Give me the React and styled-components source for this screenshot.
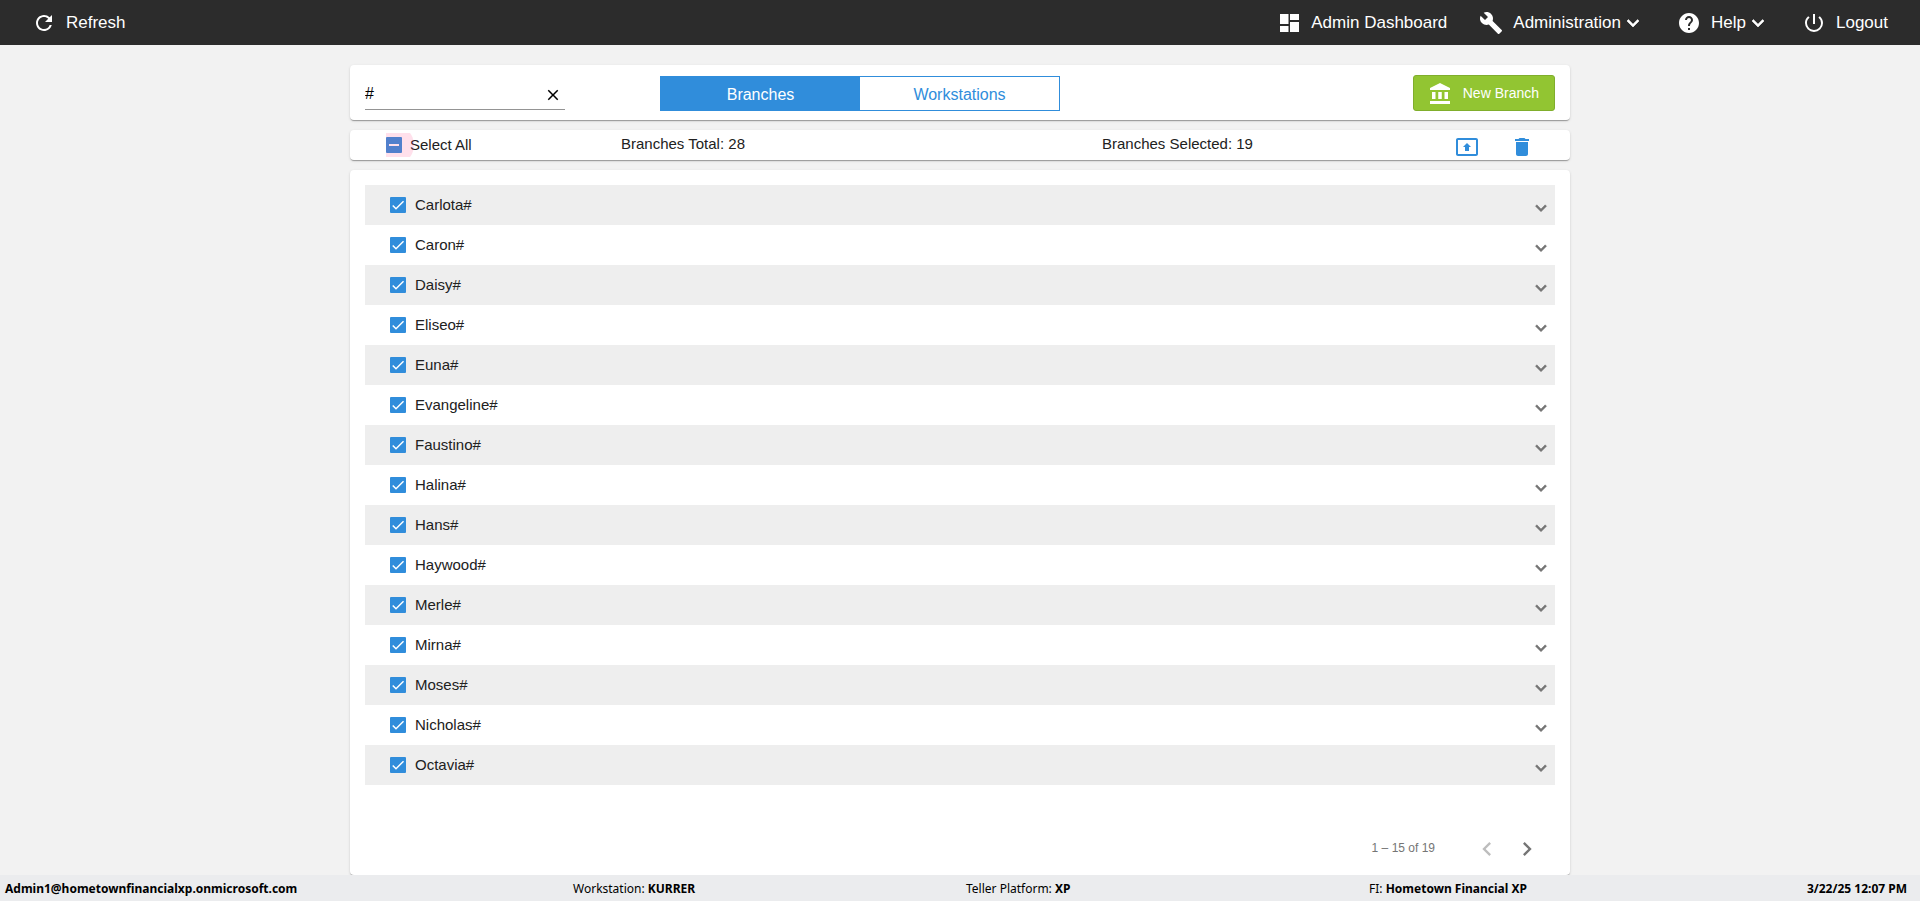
import React, { useState } from "react";
import styled, { createGlobalStyle, css } from "styled-components";
import {
  MdRefresh,
  MdBuild,
  MdHelp,
  MdPowerSettingsNew,
  MdExpandMore,
  MdPresentToAll,
  MdDelete,
  MdClose,
  MdChevronLeft,
  MdChevronRight,
} from "react-icons/md";

const blue = "#308ddb";

const GlobalStyle = createGlobalStyle`
  *, *::before, *::after { box-sizing: border-box; }
  body {
    margin: 0;
    background: #f2f2f2;
    color: #212121;
    font-family: Arial, "Liberation Sans", sans-serif;
    font-size: 15px;
  }
  button, input { font: inherit; color: inherit; }
  svg { display: block; flex: none; }
`;

const Page = styled.div`
  display: flex;
  flex-direction: column;
  min-height: 100vh;
`;

const TopBar = styled.header`
  display: flex;
  justify-content: space-between;
  align-items: center;
  height: 45px;
  padding: 0 32px;
  background: #2c2c2c;
  color: #fff;
`;

const TopNav = styled.nav`
  display: flex;
  gap: 32px;
`;

const PlainButton = styled.button`
  display: flex;
  align-items: center;
  justify-content: center;
  padding: 0;
  border: 0;
  background: none;
  cursor: pointer;
`;

const TopItem = styled(PlainButton)`
  height: 45px;
  font-size: 17px;
  white-space: nowrap;
`;

const TopLabel = styled.span`
  padding-left: 10px;
  line-height: 20px;
`;

const Chevron = styled(MdExpandMore)`
  path:last-child {
    stroke: currentColor;
    stroke-width: 0.6px;
  }
`;

const Content = styled.main`
  flex: 1;
  display: flex;
  flex-direction: column;
  gap: 10px;
  width: 100%;
  max-width: 1220px;
  margin: 20px auto 0;
`;

const Card = styled.section`
  background: #fff;
  border-radius: 4px;
  box-shadow: 0 2px 1px -1px rgba(0, 0, 0, 0.2), 0 1px 1px 0 rgba(0, 0, 0, 0.14),
    0 1px 3px 0 rgba(0, 0, 0, 0.12);
`;

const FilterCard = styled(Card)`
  display: grid;
  grid-template-columns: 295fr 400px 495fr;
  align-items: start;
  height: 55px;
  padding: 10px 15px 0;
`;

const SearchField = styled.div`
  display: flex;
  align-items: center;
  width: 200px;
  height: 30px;
  margin-top: 5px;
  padding-right: 3px;
  border-bottom: 1px solid #949494;
  color: #000;
`;

const SearchInput = styled.input`
  flex: 1;
  min-width: 0;
  height: 28px;
  padding: 0 0 2px;
  border: 0;
  outline: 0;
  background: none;
  font-size: 16px;
`;

const Toggle = styled.div`
  display: flex;
  height: 35px;
  margin-top: 1px;
  border: 1px solid ${blue};
`;

const ToggleButton = styled(PlainButton)`
  flex: 1;
  padding-top: 2px;
  font-size: 16px;
  background: ${(p) => (p.$active ? blue : "#fff")};
  color: ${(p) => (p.$active ? "#fff" : blue)};
`;

const NewButton = styled(PlainButton)`
  justify-self: end;
  gap: 11px;
  height: 36px;
  padding: 0 15px 0 14px;
  border: 1px solid #80ae2c;
  border-radius: 3px;
  background: #92c532;
  color: #fff;
  font-size: 14px;
`;

const SummaryCard = styled(Card)`
  display: grid;
  grid-template-columns: 235fr 481fr 432fr;
  align-items: center;
  height: 30px;
  padding: 0 36px;
`;

const SummaryText = styled.span`
  padding-bottom: 3px;
`;

const SelectedCell = styled.div`
  display: flex;
  align-items: center;
  justify-content: space-between;
`;

const Actions = styled.div`
  display: flex;
  gap: 31px;
  padding-top: 4px;
  color: ${blue};
`;

const CheckText = styled.span`
  padding-bottom: 1px;
`;

const CheckLabel = styled.label`
  display: flex;
  align-items: center;
  gap: ${(p) => (p.$ripple ? "8px" : "9px")};
  height: 24px;
  cursor: pointer;
  ${(p) =>
    p.$ripple &&
    css`
      position: relative;
      overflow: hidden;
      &::after {
        content: "";
        position: absolute;
        left: -12px;
        top: -8px;
        width: 40px;
        height: 40px;
        border-radius: 50%;
        background: rgba(255, 64, 129, 0.16);
        pointer-events: none;
      }
    `}
`;

const BoxWrap = styled.span`
  display: grid;
  width: 16px;
  height: 16px;
  flex: none;
  > * {
    grid-area: 1 / 1;
  }
  > svg {
    pointer-events: none;
  }
`;

const BoxInput = styled.input`
  appearance: none;
  width: 16px;
  height: 16px;
  margin: 0;
  border-radius: 1px;
  border: 2px solid #757575;
  &:checked,
  &:indeterminate {
    border: 0;
    background: ${blue};
  }
`;

const ListCard = styled(Card)`
  flex: 1;
  display: flex;
  flex-direction: column;
  padding: 15px 15px 7px;
`;

const List = styled.ul`
  margin: 0;
  padding: 0;
  list-style: none;
`;

const Row = styled.li`
  display: flex;
  align-items: center;
  justify-content: space-between;
  height: 40px;
  padding: 0 3px 0 25px;
  &:nth-child(odd) {
    background: #eee;
  }
`;

const RowToggle = styled(PlainButton)`
  padding-top: 6px;
  color: #757575;
`;

const Paginator = styled.div`
  display: flex;
  align-items: center;
  justify-content: flex-end;
  margin-top: auto;
  padding-right: 8px;
  color: #757575;
  font-size: 12px;
`;

const PageRange = styled.span`
  margin-right: 32px;
  padding-bottom: 1px;
`;

const PageButton = styled(PlainButton)`
  width: 40px;
  height: 40px;
  padding-top: 1px;
  &:disabled {
    color: #bdbdbd;
    cursor: default;
  }
`;

const StatusBar = styled.footer`
  position: relative;
  display: grid;
  grid-template-columns: 568fr 393fr 403fr 300fr 238fr;
  align-items: center;
  height: 26px;
  padding: 2px 13px 0 5px;
  background: #ebecee;
  color: #000;
  font-family: "Segoe UI", "Noto Sans", sans-serif;
  font-size: 12px;
  white-space: nowrap;
`;

const StatusItem = styled.span`
  line-height: 16px;
  &:last-child {
    text-align: right;
  }
`;

const branches = [
  "Carlota#",
  "Caron#",
  "Daisy#",
  "Eliseo#",
  "Euna#",
  "Evangeline#",
  "Faustino#",
  "Halina#",
  "Hans#",
  "Haywood#",
  "Merle#",
  "Mirna#",
  "Moses#",
  "Nicholas#",
  "Octavia#",
];

function DashboardIcon() {
  return (
    <svg width="24" height="24" viewBox="0 0 24 24" fill="currentColor" aria-hidden="true">
      <path d="M3 3h8.500v10H3zM3 15h8.500v6H3zM13 3h9v6h-9zM13 11h9v10h-9z" />
    </svg>
  );
}

function BankIcon() {
  return (
    <svg width="24" height="26" viewBox="0 -2 24 26" fill="currentColor" aria-hidden="true">
      <path d="M12 1 2 6v2h20V6zM4 10h3.500v7H4zM10.250 10h3.500v7h-3.500zM16.500 10h3.500v7h-3.500zM2 19h20v3H2z" />
    </svg>
  );
}

function Check({ checked, indeterminate, onChange }) {
  return (
    <BoxWrap>
      <BoxInput
        type="checkbox"
        checked={checked}
        onChange={onChange}
        ref={(el) => {
          if (el) el.indeterminate = !!indeterminate;
        }}
      />
      {(checked || indeterminate) && (
        <svg width="16" height="16" viewBox="0 0 24 24" fill="none" stroke="#fff" aria-hidden="true">
          {indeterminate ? (
            <path d="M4.500 12H19.500" strokeWidth="3" />
          ) : (
            <path d="M4.100 12.700 9 17.600 20.300 6.300" strokeWidth="2.2" />
          )}
        </svg>
      )}
    </BoxWrap>
  );
}

export default function App() {
  const [query, setQuery] = useState("#");
  const [tab, setTab] = useState("Branches");
  const [off, setOff] = useState({});

  return (
    <Page>
      <GlobalStyle />
      <TopBar>
        <TopItem>
          <MdRefresh size={24} />
          <TopLabel>Refresh</TopLabel>
        </TopItem>
        <TopNav>
          <TopItem>
            <DashboardIcon />
            <TopLabel>Admin Dashboard</TopLabel>
          </TopItem>
          <TopItem>
            <MdBuild size={24} />
            <TopLabel>Administration</TopLabel>
            <Chevron size={24} />
          </TopItem>
          <TopItem>
            <MdHelp size={24} />
            <TopLabel>Help</TopLabel>
            <Chevron size={24} />
          </TopItem>
          <TopItem>
            <MdPowerSettingsNew size={24} />
            <TopLabel>Logout</TopLabel>
          </TopItem>
        </TopNav>
      </TopBar>

      <Content>
        <FilterCard>
          <SearchField>
            <SearchInput
              type="text"
              aria-label="Search"
              value={query}
              onChange={(e) => setQuery(e.target.value)}
            />
            <PlainButton aria-label="Clear search" onClick={() => setQuery("")}>
              <MdClose size={18} />
            </PlainButton>
          </SearchField>
          <Toggle>
            {["Branches", "Workstations"].map((name) => (
              <ToggleButton key={name} $active={tab === name} onClick={() => setTab(name)}>
                {name}
              </ToggleButton>
            ))}
          </Toggle>
          <NewButton>
            <BankIcon />
            New Branch
          </NewButton>
        </FilterCard>

        <SummaryCard>
          <CheckLabel $ripple>
            <Check checked={false} indeterminate onChange={() => setOff({})} />
            <CheckText>Select All</CheckText>
          </CheckLabel>
          <SummaryText>Branches Total: 28</SummaryText>
          <SelectedCell>
            <SummaryText>Branches Selected: 19</SummaryText>
            <Actions>
              <PlainButton aria-label="Export">
                <MdPresentToAll size={24} />
              </PlainButton>
              <PlainButton aria-label="Delete">
                <MdDelete size={24} />
              </PlainButton>
            </Actions>
          </SelectedCell>
        </SummaryCard>

        <ListCard>
          <List>
            {branches.map((name) => (
              <Row key={name}>
                <CheckLabel>
                  <Check
                    checked={!off[name]}
                    onChange={() => setOff({ ...off, [name]: !off[name] })}
                  />
                  <CheckText>{name}</CheckText>
                </CheckLabel>
                <RowToggle aria-label={`Expand ${name}`}>
                  <Chevron size={22} />
                </RowToggle>
              </Row>
            ))}
          </List>
          <Paginator>
            <PageRange>1 – 15 of 19</PageRange>
            <PageButton aria-label="Previous page" disabled>
              <MdChevronLeft size={28} />
            </PageButton>
            <PageButton aria-label="Next page">
              <MdChevronRight size={28} />
            </PageButton>
          </Paginator>
        </ListCard>
      </Content>

      <StatusBar>
        <StatusItem>
          <b>Admin1@hometownfinancialxp.onmicrosoft.com</b>
        </StatusItem>
        <StatusItem>
          Workstation: <b>KURRER</b>
        </StatusItem>
        <StatusItem>
          Teller Platform: <b>XP</b>
        </StatusItem>
        <StatusItem>
          FI: <b>Hometown Financial XP</b>
        </StatusItem>
        <StatusItem>
          <b>3/22/25 12:07 PM</b>
        </StatusItem>
      </StatusBar>
    </Page>
  );
}
